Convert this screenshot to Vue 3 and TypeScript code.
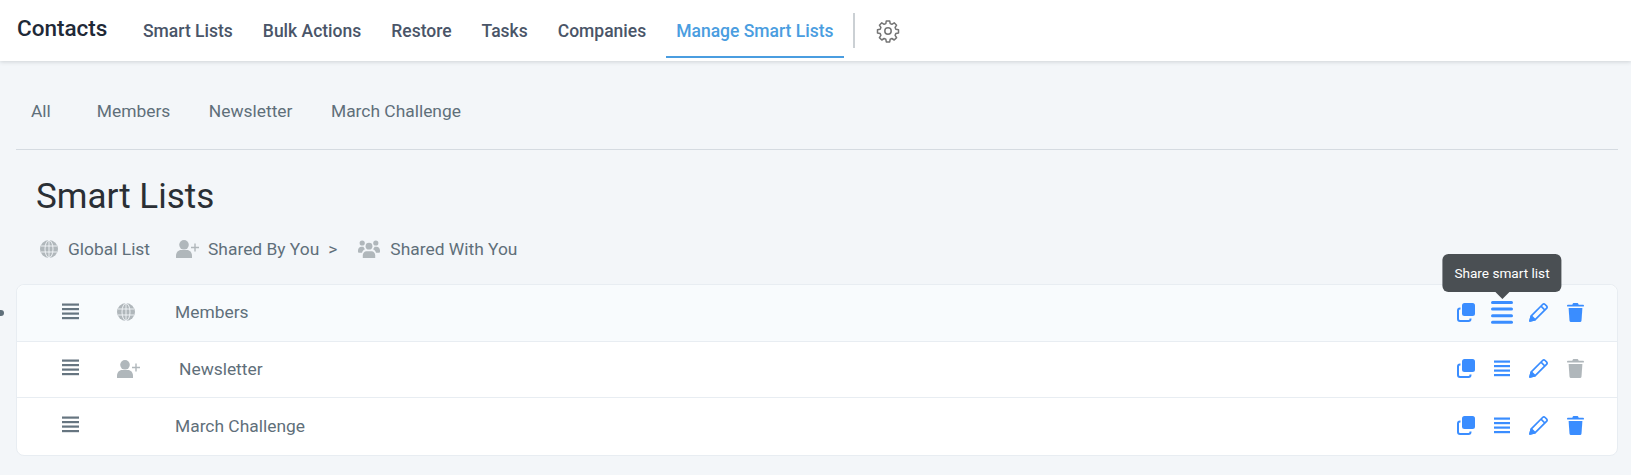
<script setup lang="ts">
interface Row { name: string; kind: 'globe' | 'user' | ''; indent: boolean; hover: boolean; trashOff: boolean }
const navItems = ['Smart Lists', 'Bulk Actions', 'Restore', 'Tasks', 'Companies']
const tabs = ['All', 'Members', 'Newsletter', 'March Challenge']
const rows: Row[] = [
  { name: 'Members', kind: 'globe', indent: false, hover: true, trashOff: false },
  { name: 'Newsletter', kind: 'user', indent: true, hover: false, trashOff: true },
  { name: 'March Challenge', kind: '', indent: false, hover: false, trashOff: false },
]
</script>

<template>
  <div class="page">
    <svg width="0" height="0" class="defs">
      <defs>
        <symbol id="globe" viewBox="0 0 18 18">
          <circle cx="9" cy="9" r="9" fill="currentColor" />
          <g fill="none" stroke="#f4f7fa" stroke-width="0.9">
            <ellipse cx="9" cy="9" rx="4" ry="8.6" />
            <path d="M9 0v18M.8 6h16.4M.8 12h16.4" />
          </g>
        </symbol>
        <symbol id="user-plus" viewBox="0 0 24 18">
          <circle cx="8" cy="4.8" r="4.8" fill="currentColor" />
          <path d="M0 18v-2.2C0 12.4 2.4 10 5 10h6c2.6 0 5 2.4 5 5.8V18z" fill="currentColor" />
          <path d="M19 3.5v8M15 7.5h8" stroke="currentColor" stroke-width="1.4" fill="none" />
        </symbol>
        <symbol id="users" viewBox="0 0 22 18">
          <circle cx="4.2" cy="3" r="2.6" fill="currentColor" />
          <circle cx="17.8" cy="3" r="2.6" fill="currentColor" />
          <circle cx="11" cy="6.2" r="3.4" fill="currentColor" />
          <path d="M0 10.6C0 8.2 1.6 6.8 3.4 6.8h2c.4 1 .9 1.8 1.6 2.4-1.6.7-2.7 1.9-3 3.5H.9A.9.9 0 0 1 0 11.8zM22 10.6c0-2.4-1.6-3.8-3.4-3.8h-2c-.4 1-.9 1.8-1.6 2.4 1.6.7 2.7 1.9 3 3.5h3.1a.9.9 0 0 0 .9-.9z" fill="currentColor" />
          <path d="M4.8 18v-2.8c0-2 1.6-4 3.6-4h5.2c2 0 3.6 2 3.6 4V18z" fill="currentColor" />
        </symbol>
      </defs>
    </svg>

    <header class="topbar">
      <span class="brand">Contacts</span>
      <nav class="nav">
        <a v-for="item in navItems" :key="item" class="nav-item">{{ item }}</a>
        <a class="nav-item active">Manage Smart Lists</a>
      </nav>
      <span class="nav-sep"></span>
      <svg class="gear" width="24" height="24" viewBox="0 0 24 24" fill="none" stroke="#757575" stroke-width="1.5" stroke-linejoin="round">
        <path d="M10.3 2.5h3.4l.5 2.7 1.7.7 2.3-1.5 2.4 2.4-1.5 2.3.7 1.7 2.7.5v3.4l-2.7.5-.7 1.7 1.5 2.3-2.4 2.4-2.3-1.5-1.7.7-.5 2.7h-3.4l-.5-2.7-1.7-.7-2.3 1.5-2.4-2.4 1.5-2.3-.7-1.7-2.7-.5v-3.4l2.7-.5.7-1.7-1.5-2.3 2.4-2.4 2.3 1.5 1.7-.7z" transform="translate(0 -.6)" />
        <circle cx="12" cy="12" r="3.2" />
      </svg>
    </header>

    <div class="tabs">
      <a v-for="tab in tabs" :key="tab" class="tab">{{ tab }}</a>
    </div>

    <h1 class="title">Smart Lists</h1>

    <div class="legend">
      <span class="legend-item g1">
        <svg class="lg-icon" width="18" height="18"><use href="#globe" /></svg>
        Global List
      </span>
      <span class="legend-item g2">
        <svg class="lg-icon" width="24" height="18"><use href="#user-plus" /></svg>
        Shared By You
        <span class="gt">&gt;</span>
      </span>
      <span class="legend-item g3">
        <svg class="lg-icon" width="22" height="18"><use href="#users" /></svg>
        Shared With You
      </span>
    </div>

    <div class="card">
      <span class="dot"></span>
      <div v-for="row in rows" :key="row.name" class="row" :class="{ hover: row.hover }">
        <svg class="drag" width="17" height="17" viewBox="0 0 17 17" fill="#667580">
          <rect y="0.5" width="17" height="2.2" />
          <rect y="5" width="17" height="2.2" />
          <rect y="9.5" width="17" height="2.2" />
          <rect y="14" width="17" height="2.2" />
        </svg>
        <span class="kind">
          <svg v-if="row.kind === 'globe'" width="18" height="18"><use href="#globe" /></svg>
          <svg v-else-if="row.kind === 'user'" width="24" height="18"><use href="#user-plus" /></svg>
        </span>
        <span class="name" :class="{ indent: row.indent }">{{ row.name }}</span>
        <div class="actions">
          <svg class="act" width="18" height="19" viewBox="0 0 18 19" fill="none">
            <rect x="5" y="0" width="13" height="13" rx="2.5" fill="#3a8dff" />
            <path d="M3.5 5.5h-.5A2 2 0 0 0 1 7.5V16a2 2 0 0 0 2 2h8.5a2 2 0 0 0 2-2v-.5" stroke="#3a8dff" stroke-width="2" />
          </svg>
          <span class="share" :class="{ big: row.hover }">
            <svg v-if="row.hover" width="22" height="23" viewBox="0 0 22 23" fill="#3a8dff">
              <rect y="0" width="22" height="3" rx="1.5" />
              <rect y="6.6" width="22" height="3" rx="1.5" />
              <rect y="13.2" width="22" height="3" rx="1.5" />
              <rect y="19.8" width="22" height="3" rx="1.5" />
            </svg>
            <svg v-else width="16" height="17" viewBox="0 0 16 17" fill="#3a8dff">
              <rect y="0.5" width="16" height="2.2" />
              <rect y="5" width="16" height="2.2" />
              <rect y="9.5" width="16" height="2.2" />
              <rect y="14" width="16" height="2.2" />
            </svg>
            <span v-if="row.hover" class="tooltip">Share smart list</span>
          </span>
          <svg class="act" width="19" height="19" viewBox="0 0 19 19" fill="none" stroke="#3a8dff" stroke-width="1.7" stroke-linejoin="round">
            <path d="M1 18l1.3-5.2L13.6 1.5a1.8 1.8 0 0 1 2.5 0l1.4 1.4a1.8 1.8 0 0 1 0 2.5L6.2 16.7z" />
            <path d="M12 3.2l3.8 3.8" />
            <path d="M1 18l1.4-5 3.6 3.6z" fill="#3a8dff" />
          </svg>
          <svg class="act trash" width="17" height="19" viewBox="0 0 17 19" :fill="row.trashOff ? '#b0b7bb' : '#3a8dff'">
            <path d="M5.5 1.2C5.7.5 6.2 0 7 0h3c.8 0 1.3.5 1.5 1.2l.2.6h4.4a.9.9 0 0 1 0 1.8H.9a.9.9 0 0 1 0-1.8h4.4z" />
            <path d="M1.6 5h13.8l-.9 12.4c-.1 1-.9 1.6-1.8 1.6H4.3c-.9 0-1.7-.6-1.8-1.6z" />
          </svg>
        </div>
      </div>
    </div>
  </div>
</template>

<style scoped>
.page {
  position: relative;
  height: 475px;
  overflow: hidden;
  background: #f3f6f9;
  font-family: Roboto, sans-serif;
  color: #5f6f7a;
  font-size: 17.4px;
}
.defs { position: absolute; }
.topbar {
  height: 61px;
  box-sizing: border-box;
  background: #fff;
  box-shadow: 0 1px 4px rgba(60, 70, 80, 0.2);
  display: flex;
  align-items: flex-start;
  padding-left: 17px;
}
.brand {
  font-size: 22.5px;
  font-weight: 500;
  color: #1f2937;
  line-height: 26px;
  margin-top: 15px;
  width: 106px;
}
.nav { display: flex; margin-left: 10px; }
.nav-item {
  height: 58px;
  box-sizing: border-box;
  padding: 22px 10px 0;
  margin-right: 10px;
  font-weight: 500;
  font-size: 17.5px;
  line-height: 19px;
  color: #4a5568;
}
.nav-item.active {
  color: #4a9de0;
  border-bottom: 2px solid #4a9de0;
  margin-right: 0;
}
.nav-sep {
  width: 2px;
  height: 35px;
  margin: 13px 0 0 9px;
  background: #cbd0d4;
}
.gear { margin: 19px 0 0 21px; }
.tabs {
  margin: 0 13px 0 16px;
  height: 89px;
  box-sizing: border-box;
  border-bottom: 1px solid #d5dbe1;
  padding: 41px 0 0 15px;
  display: flex;
  line-height: 19px;
}
.tab { margin-right: 38.5px; }
.tab:first-child { margin-right: 46px; }
.title {
  margin: 27px 0 0 36px;
  font-size: 35px;
  font-weight: 400;
  line-height: 40px;
  color: #2a2f35;
}
.legend {
  display: flex;
  align-items: center;
  margin: 22px 0 0 40px;
  height: 20px;
  line-height: 20px;
}
.legend-item { display: flex; align-items: center; color: #5f6f7a; }
.lg-icon { color: #b0b7bb; margin-right: 10px; }
.g1 { margin-right: 26px; }
.g2 { margin-right: 21px; }
.g2 .lg-icon { margin-right: 8px; }
.gt { margin-left: 9px; }
.card {
  position: relative;
  margin: 25px 13px 0 16px;
  background: #fff;
  border: 1px solid #e8edf2;
  border-radius: 8px;
}
.dot {
  position: absolute;
  left: -19px;
  top: 25px;
  width: 6px;
  height: 6px;
  border-radius: 50%;
  background: #5f6f7a;
}
.row {
  display: flex;
  align-items: center;
  height: 57px;
  border-bottom: 1px solid #e8edf2;
  padding: 0 0 2px 45px;
  box-sizing: border-box;
}
.row + .row { height: 56px; }
.row + .row + .row { height: 57px; border-bottom: none; border-radius: 0 0 8px 8px; }
.row.hover { background: #f8fbfd; border-radius: 8px 8px 0 0; }
.drag { margin-top: -2px; flex: none; }
.kind {
  width: 58px;
  margin-left: 38px;
  flex: none;
  display: flex;
  align-items: center;
  color: #b0b7bb;
}
.name { color: #5f6f7a; flex: 1; }
.name.indent { padding-left: 4px; }
.actions {
  display: flex;
  align-items: center;
  padding-right: 33px;
}
.act { flex: none; }
.trash { margin-left: 19px; }
.share {
  position: relative;
  width: 22px;
  margin: 0 16px 0 16px;
  display: flex;
  justify-content: center;
}
.tooltip {
  position: absolute;
  left: 50%;
  bottom: 32px;
  transform: translateX(-50%);
  white-space: nowrap;
  background: #4a4f53;
  color: #fff;
  font-size: 13.6px;
  line-height: 38px;
  height: 38px;
  padding: 0 12px;
  border-radius: 6px;
}
.tooltip::after {
  content: '';
  position: absolute;
  left: 50%;
  top: 100%;
  margin-left: -7px;
  border: 7px solid transparent;
  border-bottom: 0;
  border-top-color: #4a4f53;
}
</style>
